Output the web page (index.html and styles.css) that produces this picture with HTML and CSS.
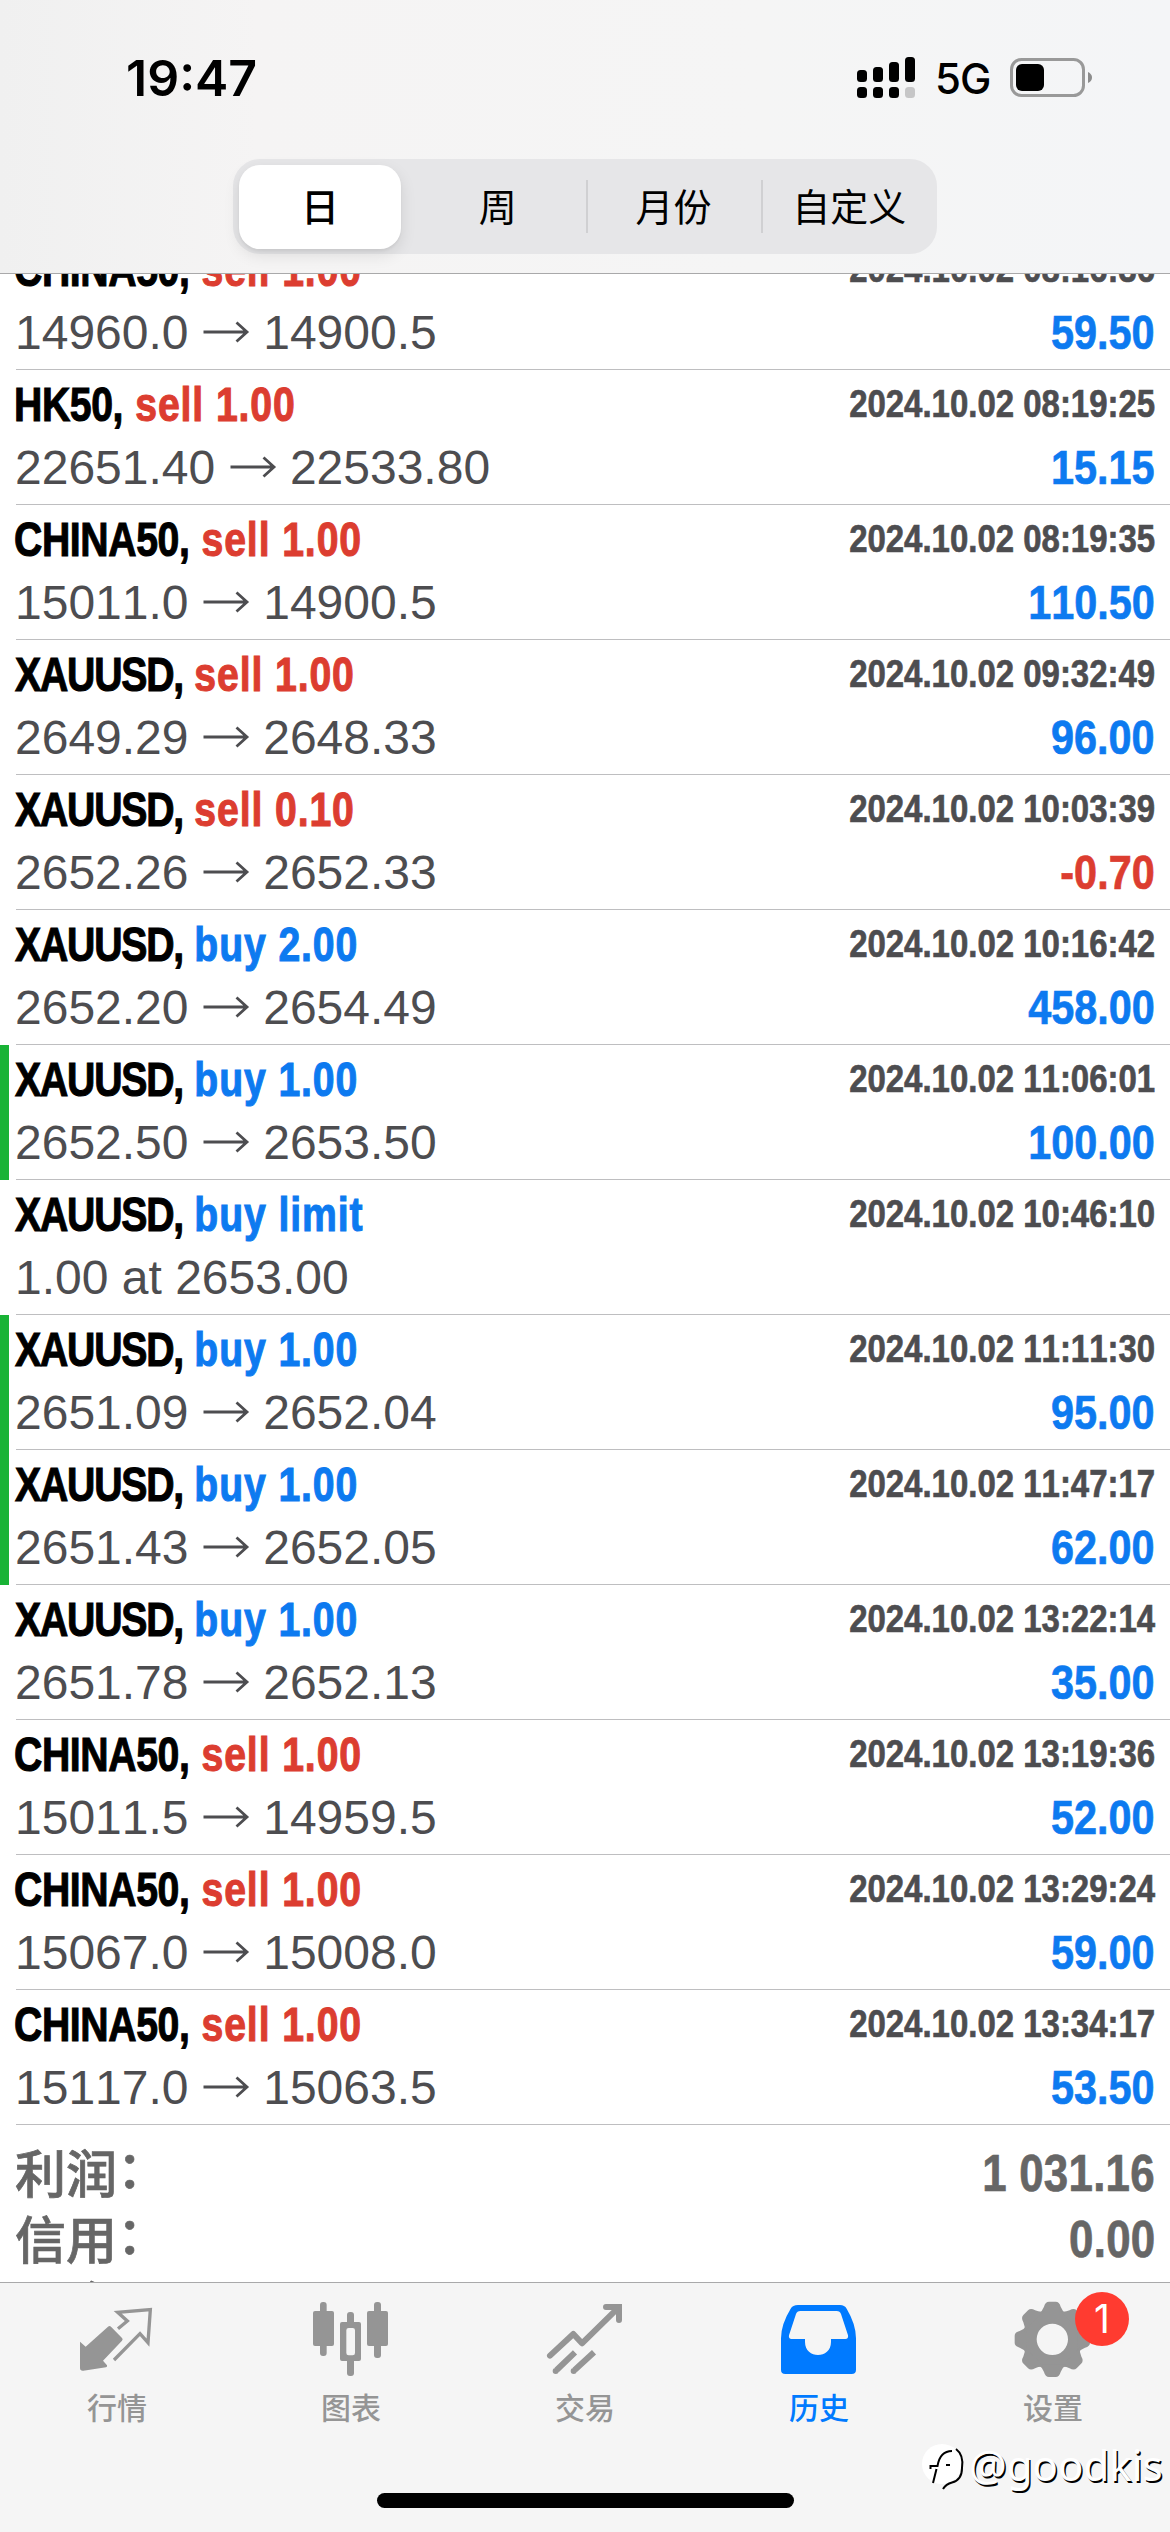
FILE: index.html
```html
<!DOCTYPE html>
<html lang="zh-CN">
<head>
<meta charset="utf-8">
<title>历史</title>
<link rel="stylesheet" href="styles.css">
</head>
<body>
<div class="screen">
  <header class="header">
    <div class="status">
      <span class="clock">19:47</span>
      <div class="status-icons">
        <svg class="signal" width="58" height="42" viewBox="0 0 58 42">
          <rect x="0" y="13" width="10" height="12" rx="3.5"/><rect x="16" y="10" width="10" height="15" rx="3.5"/><rect x="32" y="5" width="10" height="20" rx="3.5"/><rect x="48" y="0" width="10" height="25" rx="3.5"/>
          <rect x="0" y="30" width="10" height="11" rx="3.5"/><rect x="16" y="30" width="10" height="11" rx="3.5"/><rect x="32" y="30" width="10" height="11" rx="3.5"/><rect x="48" y="30" width="10" height="11" rx="3.5" fill="#c6c6c7"/>
        </svg>
        <span class="network">5G</span>
        <svg class="battery" width="83" height="40" viewBox="0 0 83 40">
          <rect x="1.5" y="1.5" width="72" height="36" rx="10" fill="none" stroke="#999" stroke-width="3"/>
          <rect x="6" y="6" width="28" height="27" rx="6"/>
          <path d="M78 14q4 2 4 5.500t-4 5.500z" fill="#8c8c8c"/>
        </svg>
      </div>
    </div>
    <nav class="segments">
      <span class="segment active">日</span>
      <span class="segment">周</span>
      <span class="segment divided">月份</span>
      <span class="segment divided">自定义</span>
    </nav>
  </header>

  <main class="history">
    <svg width="0" height="0" class="defs"><symbol id="arrow" viewBox="0 0 48 34"><path d="M1.500 17H45M34.500 7.500 45 17 34.500 26.500" fill="none" stroke="#4d4d50" stroke-width="2.800"/></symbol></svg>
    <div class="deals">
      <div class="deal"><b class="title">CHINA50, <i class="sell">sell 1.00</i></b><time>2024.10.02 08:16:36</time><span class="prices">14960.0 <svg><use href="#arrow"/></svg> 14900.5</span><b class="profit">59.50</b></div>
      <div class="deal"><b class="title">HK50, <i class="sell">sell 1.00</i></b><time>2024.10.02 08:19:25</time><span class="prices">22651.40 <svg><use href="#arrow"/></svg> 22533.80</span><b class="profit">15.15</b></div>
      <div class="deal"><b class="title">CHINA50, <i class="sell">sell 1.00</i></b><time>2024.10.02 08:19:35</time><span class="prices">15011.0 <svg><use href="#arrow"/></svg> 14900.5</span><b class="profit">110.50</b></div>
      <div class="deal gold"><b class="title">XAUUSD, <i class="sell">sell 1.00</i></b><time>2024.10.02 09:32:49</time><span class="prices">2649.29 <svg><use href="#arrow"/></svg> 2648.33</span><b class="profit">96.00</b></div>
      <div class="deal gold"><b class="title">XAUUSD, <i class="sell">sell 0.10</i></b><time>2024.10.02 10:03:39</time><span class="prices">2652.26 <svg><use href="#arrow"/></svg> 2652.33</span><b class="profit loss">-0.70</b></div>
      <div class="deal gold"><b class="title">XAUUSD, <i class="buy">buy 2.00</i></b><time>2024.10.02 10:16:42</time><span class="prices">2652.20 <svg><use href="#arrow"/></svg> 2654.49</span><b class="profit">458.00</b></div>
      <div class="deal gold marked"><b class="title">XAUUSD, <i class="buy">buy 1.00</i></b><time>2024.10.02 11:06:01</time><span class="prices">2652.50 <svg><use href="#arrow"/></svg> 2653.50</span><b class="profit">100.00</b></div>
      <div class="deal gold"><b class="title">XAUUSD, <i class="buy">buy limit</i></b><time>2024.10.02 10:46:10</time><span class="prices">1.00 at 2653.00</span></div>
      <div class="deal gold marked"><b class="title">XAUUSD, <i class="buy">buy 1.00</i></b><time>2024.10.02 11:11:30</time><span class="prices">2651.09 <svg><use href="#arrow"/></svg> 2652.04</span><b class="profit">95.00</b></div>
      <div class="deal gold marked"><b class="title">XAUUSD, <i class="buy">buy 1.00</i></b><time>2024.10.02 11:47:17</time><span class="prices">2651.43 <svg><use href="#arrow"/></svg> 2652.05</span><b class="profit">62.00</b></div>
      <div class="deal gold"><b class="title">XAUUSD, <i class="buy">buy 1.00</i></b><time>2024.10.02 13:22:14</time><span class="prices">2651.78 <svg><use href="#arrow"/></svg> 2652.13</span><b class="profit">35.00</b></div>
      <div class="deal"><b class="title">CHINA50, <i class="sell">sell 1.00</i></b><time>2024.10.02 13:19:36</time><span class="prices">15011.5 <svg><use href="#arrow"/></svg> 14959.5</span><b class="profit">52.00</b></div>
      <div class="deal"><b class="title">CHINA50, <i class="sell">sell 1.00</i></b><time>2024.10.02 13:29:24</time><span class="prices">15067.0 <svg><use href="#arrow"/></svg> 15008.0</span><b class="profit">59.00</b></div>
      <div class="deal"><b class="title">CHINA50, <i class="sell">sell 1.00</i></b><time>2024.10.02 13:34:17</time><span class="prices">15117.0 <svg><use href="#arrow"/></svg> 15063.5</span><b class="profit">53.50</b></div>
    </div>
    <div class="summary">
      <div class="sum"><span>利润<i>：</i></span><b>1 031.16</b></div>
      <div class="sum"><span>信用<i>：</i></span><b>0.00</b></div>
      <div class="sum"><span>入金<i>：</i></span></div>
    </div>
  </main>

  <footer class="tabbar">
    <div class="tab">
      <svg viewBox="51 60 240 240"><path d="M60 185 77 200 144 140q5-4 9 0L186 174q4 4 0 8L129 242 141 256q2 5-3 6L70 272q-10 1-10-8z"/><path d="M174 146 202 123 173 97 271 89 264 188 240 161 162 240" fill="none" stroke="#959595" stroke-width="10"/></svg>
      <span>行情</span>
    </div>
    <div class="tab">
      <svg viewBox="753 60 240 240"><rect x="780" y="66" width="20" height="162" rx="9"/><rect x="759" y="93" width="63" height="105" rx="6"/><rect x="942" y="66" width="21" height="168" rx="9"/><rect x="921" y="93" width="63" height="105" rx="6"/><rect x="861" y="96" width="21" height="45" rx="9"/><rect x="861" y="230" width="21" height="58" rx="9"/><path fill-rule="evenodd" d="M846 126h51q6 0 6 6v105q0 6-6 6h-51q-6 0-6-6V132q0-6 6-6zM866 144q-7 0-7 7v68q0 7 7 7h12q7 0 7-7v-68q0-7-7-7z"/></svg>
      <span>图表</span>
    </div>
    <div class="tab">
      <svg viewBox="75 60 240 240"><g fill="none" stroke="#959595" stroke-width="18"><path d="M90 227 160 162 186 190 296 82" stroke-linecap="round" stroke-linejoin="round"/><path d="M258 81H297V120" stroke-linecap="round"/><path d="M165 217 110 270M222 217 164 270"/></g><circle cx="107" cy="273" r="9"/><circle cx="161" cy="273" r="9"/></svg>
      <span>交易</span>
    </div>
    <div class="tab current">
      <svg viewBox="777 60 240 240"><path fill-rule="evenodd" d="M834 75H960Q974 75 980 86Q1008 133 1008 175V269Q1008 282 995 282H796Q783 282 783 269V175Q783 133 812 86Q818 75 834 75ZM841 93Q831 93 828 102L807 166Q805 177 815 177H855V186C855 238 933 238 933 186V177H976Q986 177 984 166L963 102Q960 93 950 93Z"/></svg>
      <span>历史</span>
    </div>
    <div class="tab">
      <svg viewBox="99 60 240 240">
        <defs><path id="tooth" d="M-42-76Q-30-84-25-98Q-21-113-10-113H10Q21-113 25-98Q30-84 42-76Z"/></defs>
        <g transform="translate(217 178)"><circle r="66.500" fill="none" stroke="#959595" stroke-width="39"/><use href="#tooth"/><use href="#tooth" transform="rotate(45)"/><use href="#tooth" transform="rotate(90)"/><use href="#tooth" transform="rotate(135)"/><use href="#tooth" transform="rotate(180)"/><use href="#tooth" transform="rotate(225)"/><use href="#tooth" transform="rotate(270)"/><use href="#tooth" transform="rotate(315)"/></g>
      </svg>
      <span>设置</span>
      <em class="badge">1</em>
    </div>
  </footer>
  <div class="home-indicator"></div>
  <div class="watermark">
    <svg width="46" height="48" viewBox="0 0 46 48"><circle cx="21" cy="20" r="20" fill="#fff"/><path d="M35 5Q43 11 41 24Q41 36 31 38.500Q25 40 22 45M31 7Q19 7 16.500 22H9.500V25M15.500 25 12 39M25 21h4" fill="none" stroke="#000" stroke-width="2"/></svg>
    <span>@goodkis</span>
  </div>
</div>
</body>
</html>
```
FILE: styles.css
```css
body {
  margin: 0;
}

.screen {
  position: relative;
  display: flex;
  flex-direction: column;
  width: 1170px;
  height: 2532px;
  overflow: hidden;
  background: #fff;
  font-family: "Liberation Sans", "Noto Sans CJK SC", sans-serif;
  font-kerning: none;
}

.header {
  box-sizing: border-box;
  flex: none;
  height: 274px;
  border-bottom: 1px solid #a9a9aa;
  background: linear-gradient(90deg, #f0f0f0, #f5f4f4 22%, #f5f5f5 65%, #f4f5f7);
}

.status {
  display: flex;
  justify-content: space-between;
  height: 159px;
  padding: 0 77px 0 126px;
  font-family: Inter, sans-serif;
}

.clock {
  font-size: 50px;
  font-weight: 600;
  line-height: 156px;
}

.status-icons {
  display: flex;
  align-items: flex-start;
}

.signal {
  margin-top: 57px;
}

.network {
  width: 57px;
  margin: 0 18px 0 20px;
  font-size: 42px;
  font-weight: 500;
  line-height: 158px;
  letter-spacing: -1px;
}

.battery {
  margin-top: 58px;
}

.segments {
  display: flex;
  width: 704px;
  height: 95px;
  margin: 0 auto;
  border-radius: 27px;
  background: #e6e6e8;
  font-family: "Noto Sans CJK SC", sans-serif;
  font-size: 38px;
  line-height: 91px;
  text-align: center;
}

.segment {
  flex: 1;
}

.segment.active {
  flex: none;
  width: 162px;
  height: 84px;
  margin: 6px 9px 5px 6px;
  border-radius: 21px;
  background: #fff;
  box-shadow: 0 6px 16px rgba(0, 0, 0, .1), 0 2px 3px rgba(0, 0, 0, .05);
  font-weight: 500;
  line-height: 79px;
}

.segment.divided {
  background: linear-gradient(#d0d0d2, #d0d0d2) 0 21px / 2px 53px no-repeat;
}

.history {
  flex: none;
  height: 2008px;
  overflow: hidden;
}

.defs {
  display: block;
}

.deals {
  margin-top: -39px;
}

.deal {
  display: grid;
  grid-template: 68px 66px / 1fr auto;
  margin-left: 16px;
  padding-right: 15px;
  border-bottom: 1px solid #bebec0;
}

.deal.marked {
  margin-left: 0;
  padding-left: 7px;
  padding-bottom: 1px;
  border-left: 9px solid #19b336;
  border-bottom: 0;
  background: linear-gradient(#bebec0, #bebec0) 7px 134px / 100% 1px no-repeat;
}

/* Condensed bold face: regular-width bold narrowed horizontally */
.title,
.deal time,
.profit,
.sum b {
  transform: scaleX(.845);
  transform-origin: right;
  -webkit-text-stroke: .7px currentColor;
}

.title {
  justify-self: start;
  margin-left: -2px;
  font-size: 49px;
  line-height: 69px;
  white-space: nowrap;
  letter-spacing: -.5px;
  word-spacing: 2px;
  transform: scaleX(.8);
  transform-origin: left;
  -webkit-text-stroke: 1.1px currentColor;
}

.gold .title {
  margin-left: -1px;
  letter-spacing: -1.5px;
}

.title i {
  font-style: normal;
  letter-spacing: 1.1px;
  word-spacing: 0;
}

.sell {
  color: #dc3d30;
}

.buy {
  color: #0d7af0;
}

.deal time {
  grid-column: 2;
  justify-self: end;
  color: #4d4d50;
  font: bold 39px/67px "Liberation Sans", sans-serif;
  font-kerning: none;
  white-space: nowrap;
  transform: scaleX(.845);
}

.prices {
  margin-left: -1px;
  color: #4d4d50;
  font-size: 48px;
  line-height: 59px;
  white-space: nowrap;
}

.prices svg {
  width: 48px;
  height: 34px;
}

.profit {
  justify-self: end;
  color: #0d7af0;
  font-size: 49px;
  line-height: 59px;
}

.profit.loss {
  color: #dc3d30;
}

.summary {
  padding: 16px 15px 0;
  color: #666;
}

.sum {
  display: flex;
  justify-content: space-between;
  height: 66px;
  font-size: 51px;
  line-height: 66px;
}

.sum span {
  margin-top: -3px;
  font-family: "Noto Sans CJK SC", sans-serif;
  font-weight: 500;
  -webkit-text-stroke: .7px currentColor;
}

.sum b {
  transform: scaleX(.86);
  letter-spacing: .3px;
}

.sum i {
  position: relative;
  top: -5px;
  font-style: normal;
}

.tabbar {
  display: flex;
  flex: none;
  height: 249px;
  border-top: 1px solid #a9a9aa;
  background: #f5f5f5;
}

.tab {
  position: relative;
  flex: 1;
  display: flex;
  flex-direction: column;
  align-items: center;
  padding-top: 17px;
  color: #959595;
  fill: currentColor;
  font-family: "Noto Sans CJK SC", sans-serif;
  font-size: 30px;
  font-weight: 500;
  line-height: 52px;
}

.tab svg {
  width: 80px;
  height: 80px;
}

.tab.current {
  color: #007aff;
}

.badge {
  position: absolute;
  top: 9px;
  left: 139px;
  width: 54px;
  height: 54px;
  border-radius: 50%;
  background: #ff3b30;
  color: #fff;
  font: normal 39px/54px Inter, sans-serif;
  text-align: center;
}

.home-indicator {
  position: absolute;
  top: 2493px;
  left: 377px;
  width: 417px;
  height: 15px;
  border-radius: 8px;
  background: #000;
}

.watermark {
  position: absolute;
  top: 2444px;
  left: 921px;
  display: flex;
  align-items: flex-start;
  color: #fff;
  font: 42px/42px "Noto Sans", sans-serif;
  text-shadow: 1.5px 1.5px 0 #000;
}

.watermark span {
  margin-left: 2px;
}
```
